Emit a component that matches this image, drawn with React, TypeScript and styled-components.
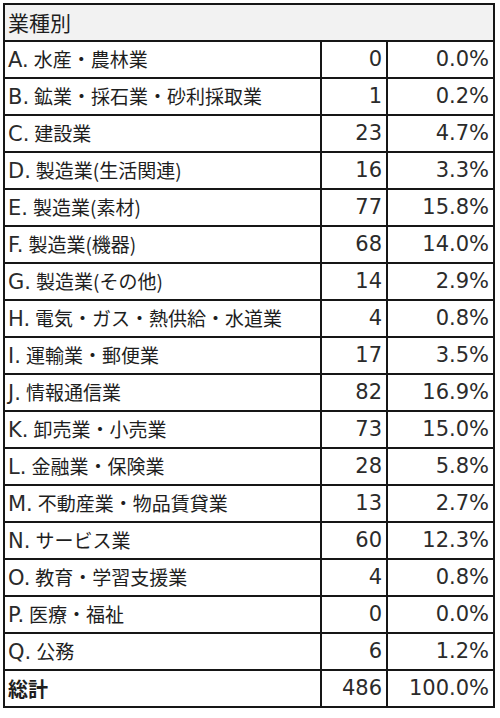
import React from "react";
import styled, { createGlobalStyle } from "styled-components";

const Global = createGlobalStyle`
  html, body { margin: 0; padding: 0; background: #ffffff; }
  body { font-family: "Noto Sans CJK JP", "Noto Sans", sans-serif; color: #1a1a1a; }
`;

const Wrap = styled.div`
  padding: 3px 0 0 3px;
`;

const Table = styled.table`
  border-collapse: collapse;
  width: 490px;
  table-layout: fixed;
`;

const Row = styled.tr`
  height: 37px;
`;

const Cell = styled.td<{ $head?: boolean }>`
  border: 2px solid #161616;
  padding: 0 0 0 3px;
  text-align: left;
  background: ${(p) => (p.$head ? "#f2f2f2" : "#ffffff")};
  white-space: nowrap;
  line-height: 1;
  vertical-align: middle;
  font-family: "Noto Sans CJK JP", sans-serif;
  font-size: ${(p) => (p.$head ? "21px" : "19px")};
  color: #1e1e1e;
`;

const NumCell = styled.td`
  border: 2px solid #161616;
  padding: 0 4px 0 0;
  text-align: right;
  background: #ffffff;
  white-space: nowrap;
  line-height: 1;
  vertical-align: middle;
  font-family: "DejaVu Sans", "Noto Sans CJK JP", sans-serif;
  font-size: 21px;
  color: #2b2b2b;
`;

const Code = styled.span`
  font-family: "DejaVu Sans", sans-serif;
  font-size: 21px;
  margin-right: 5px;
  color: #2b2b2b;
`;

const Label = styled.span<{ $bold?: boolean }>`
  font-family: "Noto Sans CJK JP", sans-serif;
  font-size: ${(p) => (p.$bold ? "20px" : "19px")};
  font-weight: ${(p) => (p.$bold ? 700 : 400)};
`;

const rows: [string, string, string, string][] = [
  ["A.", "水産・農林業", "0", "0.0%"],
  ["B.", "鉱業・採石業・砂利採取業", "1", "0.2%"],
  ["C.", "建設業", "23", "4.7%"],
  ["D.", "製造業(生活関連)", "16", "3.3%"],
  ["E.", "製造業(素材)", "77", "15.8%"],
  ["F.", "製造業(機器)", "68", "14.0%"],
  ["G.", "製造業(その他)", "14", "2.9%"],
  ["H.", "電気・ガス・熱供給・水道業", "4", "0.8%"],
  ["I.", "運輸業・郵便業", "17", "3.5%"],
  ["J.", "情報通信業", "82", "16.9%"],
  ["K.", "卸売業・小売業", "73", "15.0%"],
  ["L.", "金融業・保険業", "28", "5.8%"],
  ["M.", "不動産業・物品賃貸業", "13", "2.7%"],
  ["N.", "サービス業", "60", "12.3%"],
  ["O.", "教育・学習支援業", "4", "0.8%"],
  ["P.", "医療・福祉", "0", "0.0%"],
  ["Q.", "公務", "6", "1.2%"],
];

export default function App() {
  return (
    <Wrap>
      <Global />
      <Table>
        <colgroup>
          <col style={{ width: 317 }} />
          <col style={{ width: 66 }} />
          <col style={{ width: 107 }} />
        </colgroup>
        <tbody>
          <Row>
            <Cell $head colSpan={3}>業種別</Cell>
          </Row>
          {rows.map(([code, label, n, pct]) => (
            <Row key={code}>
              <Cell>
                <Code>{code}</Code>
                <Label>{label}</Label>
              </Cell>
              <NumCell>{n}</NumCell>
              <NumCell>{pct}</NumCell>
            </Row>
          ))}
          <Row>
            <Cell>
              <Label $bold>総計</Label>
            </Cell>
            <NumCell>486</NumCell>
            <NumCell>100.0%</NumCell>
          </Row>
        </tbody>
      </Table>
    </Wrap>
  );
}
